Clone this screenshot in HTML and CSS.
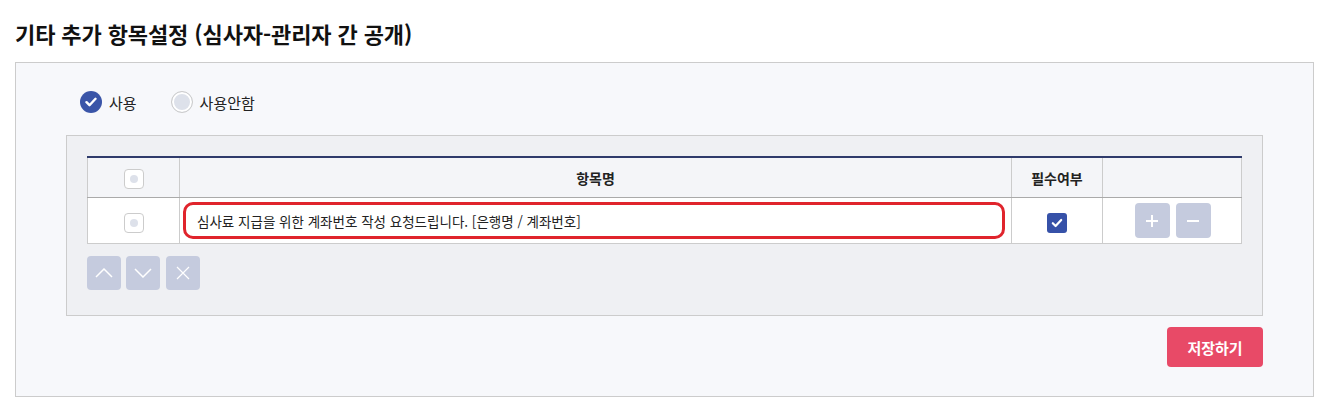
FILE: index.html
```html
<!DOCTYPE html>
<html lang="ko">
<head>
  <meta charset="UTF-8">
  <title>기타 추가 항목설정</title>
  <link rel="stylesheet" href="styles.css">
</head>
<body>

  <h2 class="title">기타 추가 항목설정 (심사자-관리자 간 공개)</h2>

  <div class="panel">
    <div class="radios">
      <label class="radio on">
        <span class="radio-mark">
          <svg width="12" height="10" viewBox="0 0 12 10"><path d="M1.5 5.2l3 3 6-6.4" fill="none" stroke="#fff" stroke-width="2.4" stroke-linecap="round" stroke-linejoin="round"/></svg>
        </span>
        사용
      </label>
      <label class="radio">
        <span class="radio-mark"></span>
        사용안함
      </label>
    </div>

    <div class="box">
      <table class="items">
        <colgroup>
          <col class="c-check">
          <col>
          <col class="c-req">
          <col class="c-btn">
        </colgroup>
        <thead>
          <tr>
            <th><span class="chk"></span></th>
            <th>항목명</th>
            <th>필수여부</th>
            <th></th>
          </tr>
        </thead>
        <tbody>
          <tr>
            <td><span class="chk"></span></td>
            <td class="name-cell"><input type="text" class="name-input" value="심사료 지급을 위한 계좌번호 작성 요청드립니다. [은행명 / 계좌번호]"></td>
            <td>
              <span class="req">
                <svg width="12" height="10" viewBox="0 0 12 10"><path d="M1.8 5.2l2.8 2.8 5.6-6" fill="none" stroke="#fff" stroke-width="2.2" stroke-linecap="round" stroke-linejoin="round"/></svg>
              </span>
            </td>
            <td>
              <div class="row-btns">
                <button class="sq">
                  <svg width="14" height="14" viewBox="0 0 14 14"><path d="M7 1v12M1 7h12" stroke="#fff" stroke-width="2"/></svg>
                </button>
                <button class="sq">
                  <svg width="14" height="14" viewBox="0 0 14 14"><path d="M1 7h12" stroke="#fff" stroke-width="2"/></svg>
                </button>
              </div>
            </td>
          </tr>
        </tbody>
      </table>

      <div class="move-btns">
        <button class="sq small">
          <svg width="18" height="10" viewBox="0 0 18 10"><path d="M1 9l8-8 8 8" fill="none" stroke="#fff" stroke-width="1.5"/></svg>
        </button>
        <button class="sq small">
          <svg width="18" height="10" viewBox="0 0 18 10"><path d="M1 1l8 8 8-8" fill="none" stroke="#fff" stroke-width="1.5"/></svg>
        </button>
        <button class="sq small">
          <svg width="14" height="14" viewBox="0 0 14 14"><path d="M1 1l12 12M13 1L1 13" fill="none" stroke="#fff" stroke-width="1.2"/></svg>
        </button>
      </div>
    </div>

    <div class="actions">
      <button class="save">저장하기</button>
    </div>
  </div>

</body>
</html>
```

FILE: styles.css
```css
body {
  margin: 0;
  padding: 18px 16px 0 15px;
  font-family: "Noto Sans CJK KR", "Noto Sans", sans-serif;
  color: #222;
  background: #fff;
}

.title {
  margin: 0 0 14px;
  font-size: 22px;
  line-height: 30px;
  font-weight: 700;
  letter-spacing: -0.1px;
  color: #111;
}

.panel {
  border: 1px solid #ccc;
  background: #f7f8fb;
  padding: 28px 50px 29px;
}

.radios {
  display: flex;
  align-items: center;
  gap: 34px;
  padding-left: 14px;
  height: 22px;
  margin-bottom: 22px;
}

.radio {
  display: flex;
  align-items: center;
  gap: 7px;
  font-size: 15px;
  color: #222;
}

.radio-mark {
  width: 22px;
  height: 22px;
  box-sizing: border-box;
  border-radius: 50%;
  border: 1px solid #ccc;
  background: #dde1ea;
  box-shadow: inset 0 0 0 2px #fff;
  display: flex;
  align-items: center;
  justify-content: center;
}

.radio.on .radio-mark {
  border: none;
  background: #3a55a8;
  box-shadow: none;
}

.box {
  border: 1px solid #ccc;
  background: #eff0f3;
  padding: 20px 20px 25px;
}

.items {
  width: 100%;
  border-collapse: collapse;
  border-top: 2px solid #2f3b6b;
  background: #fff;
}

.c-check { width: 92px; }
.c-req { width: 91px; }
.c-btn { width: 139px; }

.items th,
.items td {
  border: 1px solid #ccc;
  text-align: center;
  vertical-align: middle;
  padding: 0;
}

.items th {
  height: 39px;
  background: #f4f5f8;
  font-size: 14px;
  font-weight: 700;
  color: #222;
  border-bottom-color: #aaa;
}

.items td {
  height: 45px;
}

.chk {
  display: inline-flex;
  align-items: center;
  justify-content: center;
  width: 20px;
  height: 20px;
  box-sizing: border-box;
  border: 1px solid #ccc;
  border-radius: 4px;
  background: #fff;
  vertical-align: middle;
}

.chk::after {
  content: "";
  width: 8px;
  height: 8px;
  border-radius: 50%;
  background: #dde1ea;
}

.name-cell {
  padding: 0 6px 0 3px !important;
}

.name-input {
  display: block;
  width: 100%;
  height: 37px;
  box-sizing: border-box;
  border: 3px solid #e0242c;
  border-radius: 10px;
  padding: 0 11px;
  font-family: inherit;
  font-size: 13.5px;
  color: #222;
  background: #fff;
  outline: none;
}

.req {
  display: inline-flex;
  align-items: center;
  justify-content: center;
  width: 20px;
  height: 20px;
  border-radius: 3px;
  background: #3651a8;
  vertical-align: middle;
}

.row-btns {
  display: flex;
  justify-content: center;
  gap: 6px;
  padding-left: 1px;
}

.sq {
  width: 35px;
  height: 35px;
  border: none;
  border-radius: 4px;
  background: #c5cbde;
  padding: 0;
  display: flex;
  align-items: center;
  justify-content: center;
}

.move-btns {
  display: flex;
  gap: 5px;
  margin-top: 12px;
}

.sq.small {
  width: 34px;
  height: 34px;
}

.move-btns .sq:last-child {
  margin-left: 1px;
}

.actions {
  display: flex;
  justify-content: flex-end;
  margin-top: 11px;
}

.save {
  width: 96px;
  height: 40px;
  border: none;
  border-radius: 4px;
  background: #e84a67;
  color: #fff;
  font-family: inherit;
  font-size: 15px;
  font-weight: 700;
}
```
